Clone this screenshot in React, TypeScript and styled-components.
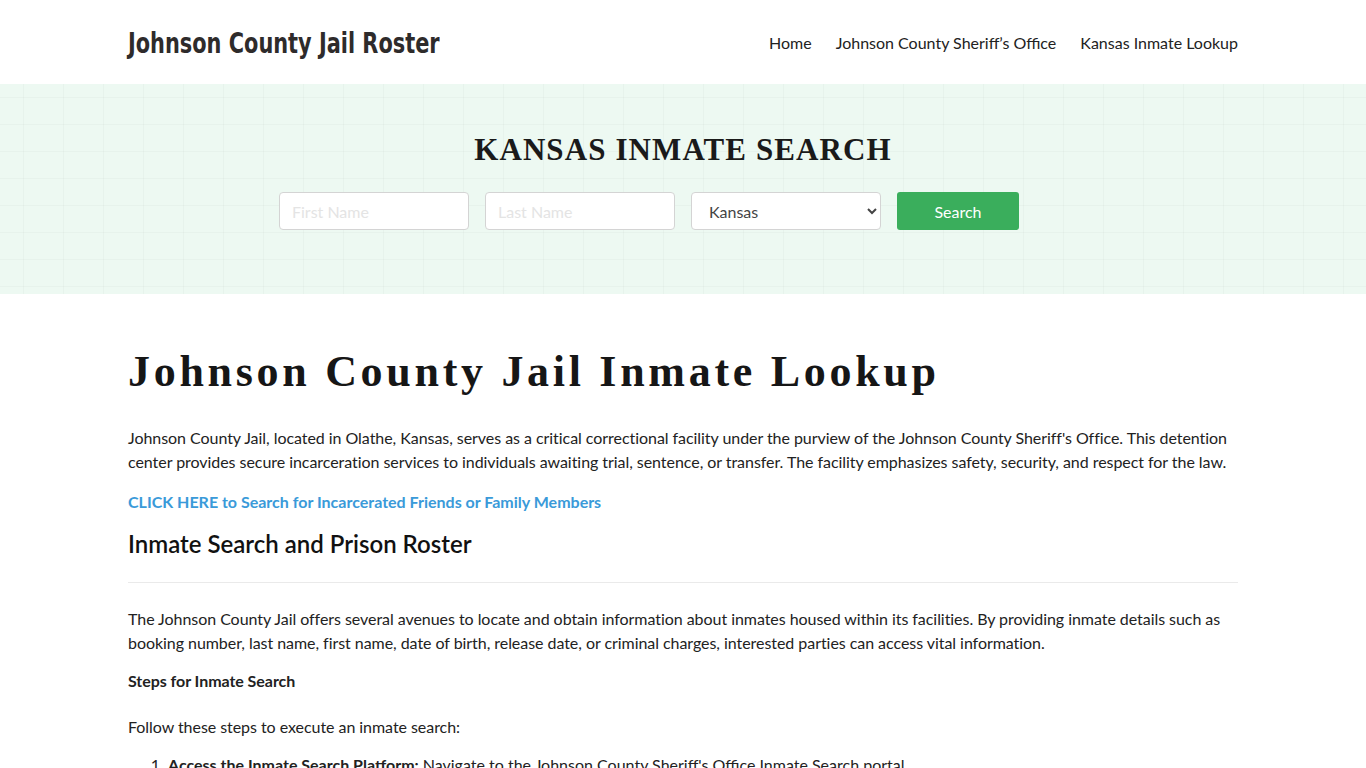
import React from 'react';
import styled, {createGlobalStyle} from "styled-components";

const GlobalStyle = createGlobalStyle`
  * {
    box-sizing: border-box;
  }

  body {
    margin: 0;
    font-family: Lato, "Open Sans", sans-serif;
    color: #222;
    background: #fff;
  }
`

const App = () => {
    return (
        <>
            <GlobalStyle/>
            <Header>
                <Container>
                    <HeaderRow>
                        <Logo href="#">Johnson County Jail Roster</Logo>
                        <Nav>
                            <NavLink href="#">Home</NavLink>
                            <NavLink href="#">Johnson County Sheriff’s Office</NavLink>
                            <NavLink href="#">Kansas Inmate Lookup</NavLink>
                        </Nav>
                    </HeaderRow>
                </Container>
            </Header>

            <Hero>
                <HeroTitle>Kansas Inmate Search</HeroTitle>
                <SearchForm onSubmit={e => e.preventDefault()}>
                    <Field placeholder="First Name"/>
                    <Field placeholder="Last Name"/>
                    <Select defaultValue="Kansas">
                        <option>Kansas</option>
                    </Select>
                    <SearchButton type="submit">Search</SearchButton>
                </SearchForm>
            </Hero>

            <Main>
                <Container>
                    <Title>Johnson County Jail Inmate Lookup</Title>
                    <Text>
                        Johnson County Jail, located in Olathe, Kansas, serves as a critical correctional facility under
                        the purview of the Johnson County Sheriff's Office. This detention center provides secure
                        incarceration services to individuals awaiting trial, sentence, or transfer. The facility
                        emphasizes safety, security, and respect for the law.
                    </Text>
                    <CtaLink href="#">CLICK HERE to Search for Incarcerated Friends or Family Members</CtaLink>
                    <Subtitle>Inmate Search and Prison Roster</Subtitle>
                    <Divider/>
                    <Text $gap={14}>
                        The Johnson County Jail offers several avenues to locate and obtain information about inmates
                        housed within its facilities. By providing inmate details such as booking number, last name,
                        first name, date of birth, release date, or criminal charges, interested parties can access
                        vital information.
                    </Text>
                    <Text $gap={22}><strong>Steps for Inmate Search</strong></Text>
                    <Text $gap={14}>Follow these steps to execute an inmate search:</Text>
                    <Steps>
                        <li>
                            <strong>Access the Inmate Search Platform:</strong> Navigate to the Johnson County
                            Sheriff's Office Inmate Search portal.
                        </li>
                        <li>
                            <strong>Enter Inmate Details:</strong> Provide the booking number, last name or first
                            name of the inmate.
                        </li>
                    </Steps>
                </Container>
            </Main>
        </>
    );
};

export default App;

const Container = styled.div`
  width: 1110px;
  margin: 0 auto;
`

const Header = styled.header`
  height: 84px;
  background: #fff;
`

const HeaderRow = styled.div`
  height: 84px;
  display: flex;
  align-items: center;
  justify-content: space-between;
`

// no condensed grotesque installed: squeeze the condensed DejaVu a bit more
const Logo = styled.a`
  display: inline-block;
  width: 309px;
  white-space: nowrap;
  font-family: "DejaVu Sans Condensed", sans-serif;
  font-weight: 700;
  font-size: 29px;
  color: #2e2b2b;
  text-decoration: none;
  margin-top: 2px;
  transform: scaleX(0.8);
  transform-origin: left center;
`

const Nav = styled.nav`
  display: flex;
  gap: 24px;
`

const NavLink = styled.a`
  font-size: 16px;
  color: #222;
  text-decoration: none;
`

const Hero = styled.section`
  height: 210px;
  padding-top: 48px;
  background-color: #edf9f2;
  background-image: linear-gradient(to right, rgba(0, 0, 0, 0.025) 1px, transparent 1px),
  linear-gradient(to bottom, rgba(0, 0, 0, 0.025) 1px, transparent 1px);
  background-size: 40px 27px;
  background-position: 23px 13px;
`

const HeroTitle = styled.h2`
  margin: 0 0 24px;
  text-align: center;
  text-transform: uppercase;
  font-family: "Liberation Serif", serif;
  font-weight: 700;
  font-size: 31px;
  line-height: 36px;
  letter-spacing: 1.1px;
  color: #1a1a1a;
`

const SearchForm = styled.form`
  display: flex;
  justify-content: center;
  gap: 16px;
  padding-right: 68px;
`

const Field = styled.input`
  width: 190px;
  height: 38px;
  padding: 0 12px;
  border: 1px solid #d4d4d4;
  border-radius: 4px;
  background: #fff;
  font-family: Lato, sans-serif;
  font-size: 16px;
  color: #555;

  &::placeholder {
    color: #e4e4e4;
  }
`

const Select = styled.select`
  width: 190px;
  height: 38px;
  padding: 0 10px 0 13px;
  border: 1px solid #d4d4d4;
  border-radius: 4px;
  background: #fff;
  font-family: Lato, sans-serif;
  font-size: 16px;
  color: #444;
`

const SearchButton = styled.button`
  width: 122px;
  height: 38px;
  border: none;
  border-radius: 3px;
  background: #3aae5c;
  color: #fff;
  font-family: Lato, sans-serif;
  font-size: 16px;
  cursor: pointer;
`

const Main = styled.main`
  padding-top: 50px;
`

const Title = styled.h1`
  margin: 0 0 26px;
  font-family: "Liberation Serif", serif;
  font-weight: 700;
  font-size: 44px;
  line-height: 56px;
  letter-spacing: 3.7px;
  color: #161616;
`

const Text = styled.p<{ $gap?: number }>`
  margin: 0 0 ${p => p.$gap ?? 16}px;
  font-size: 16px;
  line-height: 24px;
  letter-spacing: -0.05px;
  color: #222;

  strong {
    font-weight: 700;
  }
`

const CtaLink = styled.a`
  display: block;
  margin-bottom: 14px;
  font-size: 16px;
  line-height: 24px;
  font-weight: 700;
  color: #3a9ad9;
  text-decoration: none;
`

const Subtitle = styled.h2`
  margin: 0;
  font-size: 24px;
  line-height: 32px;
  font-weight: 600;
  color: #111;
`

const Divider = styled.hr`
  margin: 22px 0 24px;
  border: none;
  border-top: 1px solid #eaeaea;
`

const Steps = styled.ol`
  margin: 0;
  padding-left: 40px;
  font-size: 16px;
  line-height: 24px;

  li {
    margin-bottom: 10px;
  }
`
